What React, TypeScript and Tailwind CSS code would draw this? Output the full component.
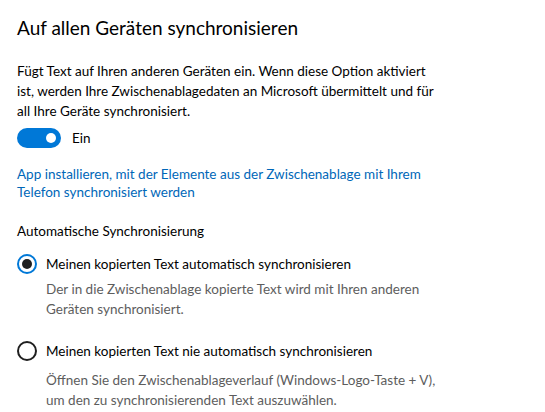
export default function App() {
  return (
    <div className="w-[545px] h-[412px] bg-white pl-[17px] pt-[14px] text-black overflow-hidden" style={{ fontFamily: '"Segoe UI", Lato, sans-serif' }}>
      <h1 className="text-[19px] leading-[28px] font-normal">Auf allen Geräten synchronisieren</h1>

      <p className="mt-[19px] text-[13.5px] leading-[20px] whitespace-nowrap">
        Fügt Text auf Ihren anderen Geräten ein. Wenn diese Option aktiviert
        <br />
        ist, werden Ihre Zwischenablagedaten an Microsoft übermittelt und für
        <br />
        all Ihre Geräte synchronisiert.
      </p>

      <div className="mt-[7px] flex items-center gap-[11px]">
        <div className="w-[44px] h-[20px] rounded-full bg-[#0078d7] flex items-center justify-end pr-[5px]">
          <div className="w-[10px] h-[10px] rounded-full bg-white" />
        </div>
        <span className="text-[13.5px] leading-[20px]">Ein</span>
      </div>

      <a className="block mt-[17px] text-[13.5px] leading-[18px] text-[#0067b8] whitespace-nowrap">
        App installieren, mit der Elemente aus der Zwischenablage mit Ihrem
        <br />
        Telefon synchronisiert werden
      </a>

      <div className="mt-[20px] text-[13.5px] leading-[20px]">Automatische Synchronisierung</div>

      <div className="mt-[13px] flex items-center gap-[9px]">
        <div className="w-[20px] h-[20px] rounded-full border-2 border-[#0078d7] flex items-center justify-center">
          <div className="w-[10px] h-[10px] rounded-full bg-[#1f1f1f]" />
        </div>
        <span className="text-[13.5px] leading-[20px]">Meinen kopierten Text automatisch synchronisieren</span>
      </div>
      <p className="ml-[29px] mt-[5px] text-[13.5px] leading-[20px] text-[#5d5d5d] whitespace-nowrap">
        Der in die Zwischenablage kopierte Text wird mit Ihren anderen
        <br />
        Geräten synchronisiert.
      </p>

      <div className="mt-[22px] flex items-center gap-[9px]">
        <div className="w-[20px] h-[20px] rounded-full border-2 border-[#1f1f1f]" />
        <span className="text-[13.5px] leading-[20px]">Meinen kopierten Text nie automatisch synchronisieren</span>
      </div>
      <p className="ml-[29px] mt-[9px] text-[13.5px] leading-[20px] text-[#5d5d5d] whitespace-nowrap">
        Öffnen Sie den Zwischenablageverlauf (Windows-Logo-Taste + V),
        <br />
        um den zu synchronisierenden Text auszuwählen.
      </p>
    </div>
  );
}
